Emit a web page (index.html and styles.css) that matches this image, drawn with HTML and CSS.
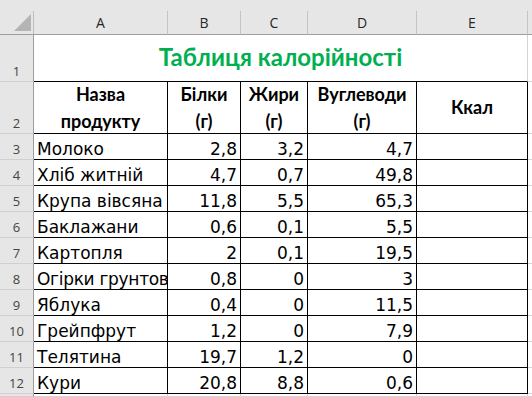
FILE: index.html
```html
<!DOCTYPE html>
<html lang="uk">
<head>
<meta charset="utf-8">
<title>Таблиця калорійності</title>
<link rel="stylesheet" href="styles.css">
</head>
<body>
<div class="sheet">
  <div class="corner"><span class="tri"></span></div>
  <div class="ch">A</div>
  <div class="ch">B</div>
  <div class="ch">C</div>
  <div class="ch">D</div>
  <div class="ch">E</div>
  <div class="ch"></div>

  <div class="rh">1</div>
  <div class="c title">Таблиця калорійності</div>
  <div class="c"></div>

  <div class="rh">2</div>
  <div class="c t hd"><span class="lbl">Назва<br>продукту</span></div>
  <div class="c t hd"><span class="lbl">Білки<br>(г)</span></div>
  <div class="c t hd"><span class="lbl">Жири<br>(г)</span></div>
  <div class="c t hd"><span class="lbl">Вуглеводи<br>(г)</span></div>
  <div class="c t hd"><span class="lbl">Ккал</span></div>
  <div class="c"></div>

  <div class="rh">3</div>
  <div class="c t">Молоко</div><div class="c t n">2,8</div><div class="c t n">3,2</div><div class="c t n">4,7</div><div class="c t"></div><div class="c"></div>
  <div class="rh">4</div>
  <div class="c t">Хліб житній</div><div class="c t n">4,7</div><div class="c t n">0,7</div><div class="c t n">49,8</div><div class="c t"></div><div class="c"></div>
  <div class="rh">5</div>
  <div class="c t">Крупа вівсяна</div><div class="c t n">11,8</div><div class="c t n">5,5</div><div class="c t n">65,3</div><div class="c t"></div><div class="c"></div>
  <div class="rh">6</div>
  <div class="c t">Баклажани</div><div class="c t n">0,6</div><div class="c t n">0,1</div><div class="c t n">5,5</div><div class="c t"></div><div class="c"></div>
  <div class="rh">7</div>
  <div class="c t">Картопля</div><div class="c t n">2</div><div class="c t n">0,1</div><div class="c t n">19,5</div><div class="c t"></div><div class="c"></div>
  <div class="rh">8</div>
  <div class="c t tight">Огірки грунтов</div><div class="c t n">0,8</div><div class="c t n">0</div><div class="c t n">3</div><div class="c t"></div><div class="c"></div>
  <div class="rh">9</div>
  <div class="c t">Яблука</div><div class="c t n">0,4</div><div class="c t n">0</div><div class="c t n">11,5</div><div class="c t"></div><div class="c"></div>
  <div class="rh">10</div>
  <div class="c t">Грейпфрут</div><div class="c t n">1,2</div><div class="c t n">0</div><div class="c t n">7,9</div><div class="c t"></div><div class="c"></div>
  <div class="rh">11</div>
  <div class="c t">Телятина</div><div class="c t n">19,7</div><div class="c t n">1,2</div><div class="c t n">0</div><div class="c t"></div><div class="c"></div>
  <div class="rh">12</div>
  <div class="c t">Кури</div><div class="c t n">20,8</div><div class="c t n">8,8</div><div class="c t n">0,6</div><div class="c t"></div><div class="c"></div>

  <div class="rh"></div>
  <div class="c"></div><div class="c"></div><div class="c"></div><div class="c"></div><div class="c"></div><div class="c"></div>
</div>
</body>
</html>
```

FILE: styles.css
```css
* {
  box-sizing: border-box;
  margin: 0;
  padding: 0;
}

html, body {
  width: 532px;
  height: 397px;
  overflow: hidden;
  background: #ffffff;
}

.sheet {
  display: grid;
  grid-template-columns: 34px 134px 73px 67px 109px 111px 1fr;
  grid-template-rows: 35px 47px 52px repeat(10, 26px) 1fr;
  width: 532px;
  height: 397px;
  background: #e6e6e6;
}

.corner {
  background: #e6e6e6;
  border-bottom: 1px solid #9e9e9e;
  display: flex;
  align-items: flex-end;
  justify-content: flex-end;
  padding: 0 3px 3px 0;
  position: relative;
}

.corner::after {
  content: "";
  position: absolute;
  right: 0;
  top: 11px;
  bottom: 0;
  width: 1px;
  background: #bdbdbd;
}

.tri {
  display: block;
  width: 17px;
  height: 17px;
  background: #b4b4b4;
  clip-path: polygon(100% 0, 100% 100%, 0 100%);
}

.ch {
  margin-top: 11px;
  background: #e6e6e6;
  border-right: 1px solid #c4c4c4;
  border-bottom: 1px solid #9e9e9e;
  display: flex;
  justify-content: center;
  align-items: flex-end;
  padding-bottom: 2px;
  font-family: "Open Sans", "DejaVu Sans", sans-serif;
  font-size: 14px;
  line-height: 18px;
  color: #262626;
}

.rh {
  background: #e6e6e6;
  border-right: 1px solid #9e9e9e;
  border-bottom: 1px solid #d0d0d0;
  display: flex;
  justify-content: center;
  align-items: flex-end;
  padding-bottom: 1px;
  font-family: "Open Sans", "DejaVu Sans", sans-serif;
  font-size: 13px;
  line-height: 18px;
  color: #444444;
}

.c {
  background: #ffffff;
  border-right: 1px solid #d4d4d4;
  border-bottom: 1px solid #d4d4d4;
  overflow: hidden;
  white-space: nowrap;
  display: flex;
  align-items: flex-end;
  padding: 0 3px;
  font-family: "DejaVu Sans", "Liberation Sans", sans-serif;
  font-size: 17px;
  line-height: 20px;
  color: #000000;
}

.t {
  border-right-color: #000000;
  border-bottom-color: #000000;
}

.n {
  justify-content: flex-end;
}

.tight {
  padding-right: 0;
  letter-spacing: -0.3px;
}

.title {
  grid-column: span 5;
  border-bottom-color: #000000;
  justify-content: center;
  align-items: center;
  padding-bottom: 3px;
  font-family: Lato, "Open Sans", sans-serif;
  font-weight: 700;
  font-size: 24px;
  line-height: 28px;
  color: #00b050;
}

.hd {
  justify-content: center;
  align-items: center;
  white-space: normal;
  font-family: Lato, "Open Sans", sans-serif;
  font-weight: 700;
  font-size: 18px;
  line-height: 27px;
}

.lbl {
  display: block;
  text-align: center;
}
```
